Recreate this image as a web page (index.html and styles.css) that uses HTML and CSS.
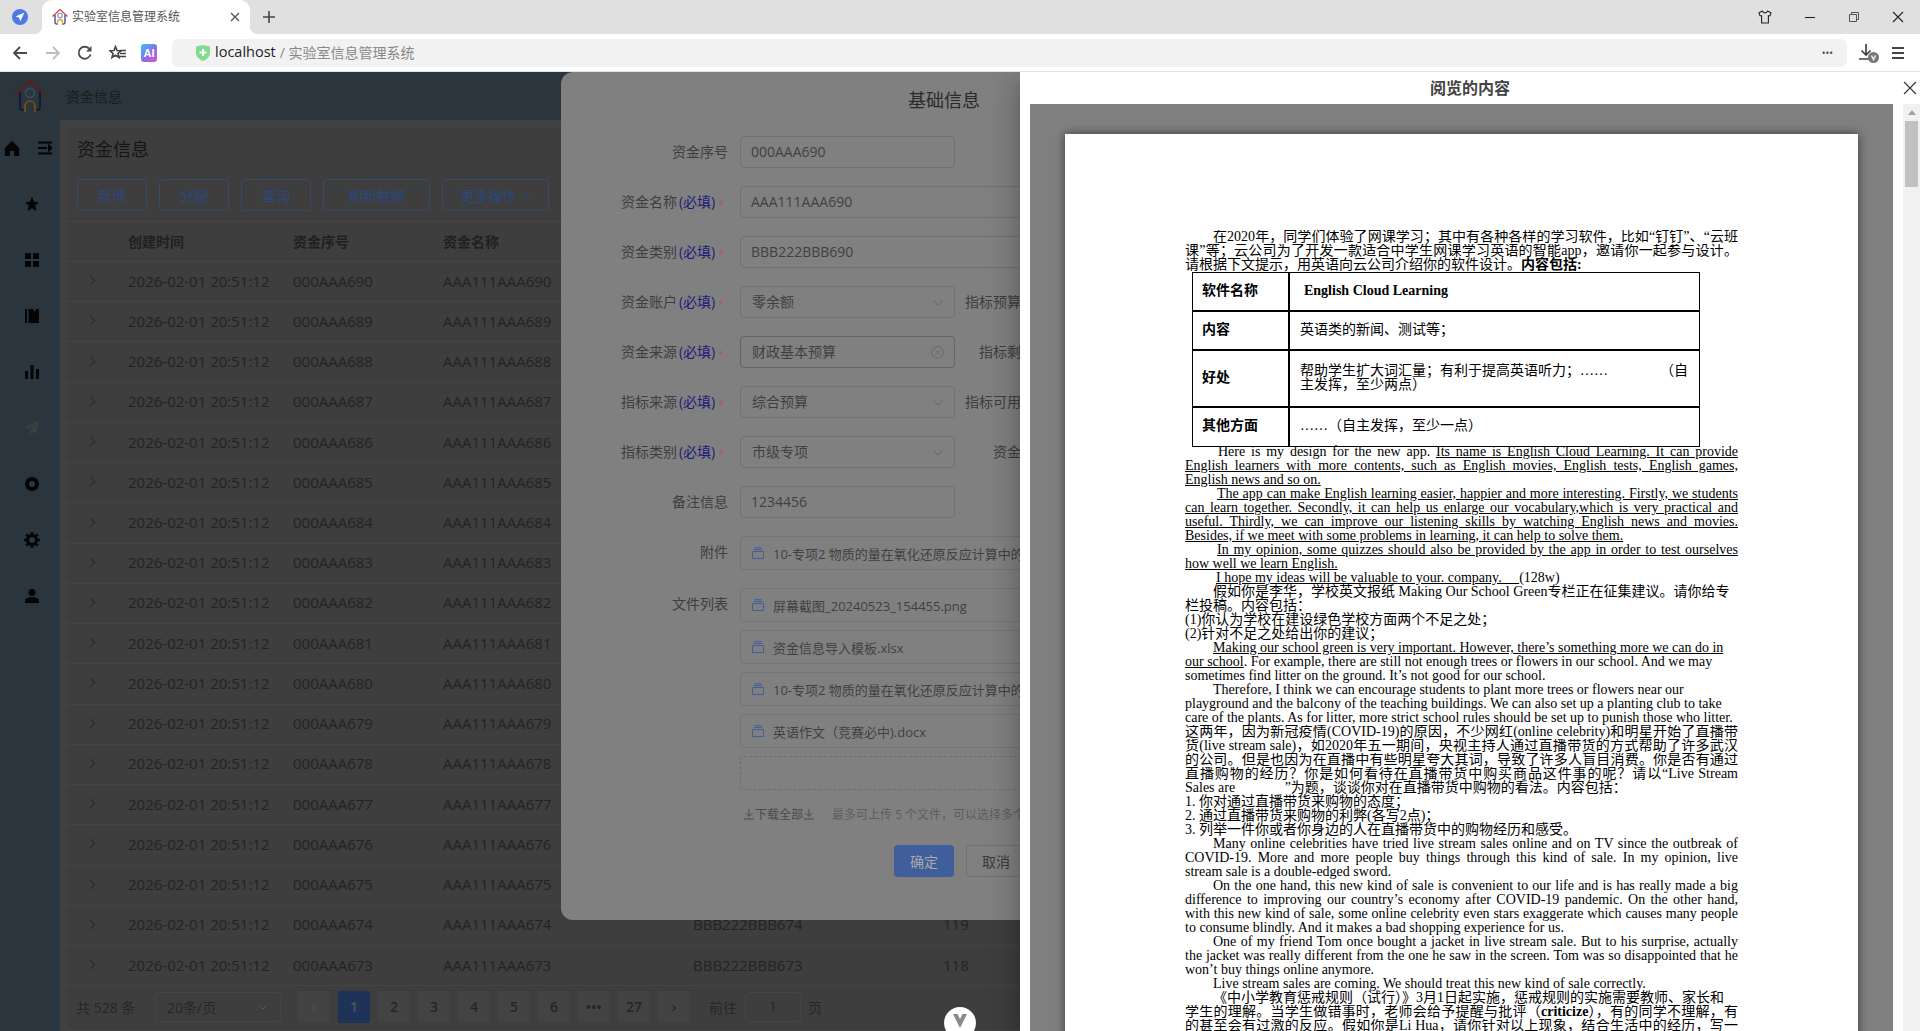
FILE: index.html
```html
<!DOCTYPE html>
<html lang="zh-CN">
<head>
<meta charset="utf-8">
<title>实验室信息管理系统</title>
<link rel="stylesheet" href="styles.css">
</head>
<body>
<header class="chrome">
  <div class="tabstrip">
    <div class="tab-app">
      <svg width="16" height="16" viewBox="0 0 16 16"><circle cx="8" cy="8" r="8" fill="#4c79e6"/><path d="M12.4 3.4 3.6 7.6l3.6 1.1 1.1 3.7z" fill="#fff"/></svg>
    </div>
    <div class="tab">
      <svg class="tab-logo" width="16" height="16" viewBox="0 0 32 32"><path d="M1 15 16 1l15 14" fill="none" stroke="#d8453a" stroke-width="2.6"/><path d="M6 12v15c0 2 1 3 3 3h1M26 12v15c0 2-1 3-3 3h-1" fill="none" stroke="#2b4a86" stroke-width="2.6"/><circle cx="16" cy="13" r="4.5" fill="none" stroke="#7b93c6" stroke-width="2.4"/><path d="M11 32v-6a5 5 0 0 1 10 0v6" fill="none" stroke="#e9a13c" stroke-width="2.6"/></svg>
      <span class="tab-title">实验室信息管理系统</span>
      <svg class="tab-close" width="10" height="10" viewBox="0 0 10 10"><path d="M1 1l8 8M9 1 1 9" stroke="#555" stroke-width="1.3"/></svg>
    </div>
    <svg class="tab-new" width="14" height="14" viewBox="0 0 14 14"><path d="M7 1v12M1 7h12" stroke="#444" stroke-width="1.6"/></svg>
    <div class="window-btns">
      <svg width="14" height="14" viewBox="0 0 14 14"><path d="M4.5 1 1 2.8l1 3h1.6V13h6.8V5.8h1.6l1-3L9.500 1C9 3.500 5 3.500 4.500 1z" fill="none" stroke="#222" stroke-width="1.1"/></svg>
      <svg width="12" height="12" viewBox="0 0 12 12"><path d="M1 6.5h10" stroke="#222" stroke-width="1.1"/></svg>
      <svg width="12" height="12" viewBox="0 0 12 12"><path d="M1.5 3.5h7v7h-7zM3.5 3.5v-2h7v7h-2" fill="none" stroke="#555" stroke-width="1"/></svg>
      <svg width="12" height="12" viewBox="0 0 12 12"><path d="M1 1l10 10M11 1 1 11" stroke="#222" stroke-width="1.1"/></svg>
    </div>
  </div>
  <div class="toolbar">
    <svg class="tool back" width="16" height="16" viewBox="0 0 16 16"><path d="M15 8H2M8 2 2 8l6 6" fill="none" stroke="#4a4a4a" stroke-width="1.8"/></svg>
    <svg class="tool fwd" width="16" height="16" viewBox="0 0 16 16"><path d="M1 8h13M8 2l6 6-6 6" fill="none" stroke="#bdbdbd" stroke-width="1.8"/></svg>
    <svg class="tool reload" width="16" height="16" viewBox="0 0 16 16"><path d="M13.5 9.500A6 6 0 1 1 12 3.500" fill="none" stroke="#4a4a4a" stroke-width="1.8"/><path d="M14.5 1v5.500H9z" fill="#4a4a4a"/></svg>
    <svg class="tool fav" width="18" height="16" viewBox="0 0 18 16"><path d="M6.5 1.500 8 5.500l4 .3-3 2.700 1 4-3.500-2.200L3 12.500l1-4-3-2.700 4-.3z" fill="none" stroke="#444" stroke-width="1.6"/><path d="M11 5.500h6M11 8.500h6M10 11.500h7" stroke="#444" stroke-width="1.6"/></svg>
    <span class="ai-badge">AI</span>
    <div class="address">
      <svg class="shield" width="14" height="16" viewBox="0 0 14 16"><path d="M0 1.500 7 0l7 1.500V8c0 4-3.500 6.500-7 8-3.500-1.500-7-4-7-8z" fill="#83db90"/><path d="M7 4v7M3.500 7.500h7" stroke="#fff" stroke-width="2"/></svg>
      <span class="host">localhost</span>
      <span class="path">/ 实验室信息管理系统</span>
      <span class="more">•••</span>
    </div>
    <div class="download">
      <svg width="22" height="20" viewBox="0 0 22 20"><path d="M8 1v11M3.500 7.500 8 12l4.500-4.500M1 16h12" fill="none" stroke="#444" stroke-width="1.7"/><circle cx="15.500" cy="14.500" r="5.500" fill="#777"/><path d="m13.500 12.500 2 4 2-4" fill="none" stroke="#eee" stroke-width="1.6"/></svg>
    </div>
    <svg class="tool menu" width="14" height="14" viewBox="0 0 14 14"><path d="M1 2h12M1 7h12M1 12h12" stroke="#444" stroke-width="1.8"/></svg>
  </div>
</header>

<div class="app">
  <div class="app-header">
    <svg class="app-logo" width="32" height="32" viewBox="0 0 32 32"><path d="M1 15 16 1l15 14" fill="none" stroke="#5e1d1a" stroke-width="2"/><path d="M6 12v15c0 2 1 3 3 3h1M26 12v15c0 2-1 3-3 3h-1" fill="none" stroke="#141c35" stroke-width="2"/><circle cx="16" cy="13" r="4.500" fill="none" stroke="#35495f" stroke-width="2"/><path d="M11 32v-6a5 5 0 0 1 10 0v6" fill="none" stroke="#6a4a1f" stroke-width="2"/></svg>
    <span class="app-name">资金信息</span>
  </div>
  <div class="app-body">
    <nav class="sidebar">
      <div class="side-top">
        <svg width="16" height="16" viewBox="0 0 16 16"><path d="M8 1 .8 8v8h5v-5h4.400v5h5V8z" fill="#050505"/></svg>
        <svg width="14" height="14" viewBox="0 0 14 14"><path d="M0 1.500h14M0 7h9M0 12.500h14M11 4.500 13.500 7 11 9.500z" stroke="#050505" stroke-width="1.8" fill="#050505"/></svg>
      </div>
      <div class="side-item"><svg width="14" height="14" viewBox="0 0 14 14"><path d="m7 0 2.100 4.700 4.900.5-3.700 3.300L11.400 14 7 11.200 2.600 14l1.100-5.500L0 5.200l4.900-.5z" fill="#050505"/></svg></div>
      <div class="side-item"><svg width="14" height="14" viewBox="0 0 14 14"><path d="M0 0h6v6H0zM8 0h6v6H8zM0 8h6v6H0zM8 8h6v6H8z" fill="#050505"/></svg></div>
      <div class="side-item"><svg width="14" height="14" viewBox="0 0 14 14"><path d="M0 0h2v14H0zM3.500 0H8l1.500 3L11 0h3v14H3.500z" fill="#050505"/></svg></div>
      <div class="side-item"><svg width="14" height="14" viewBox="0 0 14 14"><path d="M0 6h3v8H0zM5.500 0h3v14h-3zM11 4h3v10h-3z" fill="#050505"/></svg></div>
      <div class="side-item"><svg width="14" height="14" viewBox="0 0 14 14"><path d="M14 0 0 6l3.500 2L12 2.500 5 9v5l2.500-3 3.500 2z" fill="#3c3f40"/></svg></div>
      <div class="side-item"><svg width="14" height="14" viewBox="0 0 14 14"><circle cx="7" cy="7" r="5" fill="none" stroke="#050505" stroke-width="4"/></svg></div>
      <div class="side-item"><svg width="16" height="16" viewBox="0 0 16 16"><circle cx="8" cy="8" r="4.500" fill="none" stroke="#050505" stroke-width="3"/><path d="M8 0v3M8 13v3M0 8h3M13 8h3M2.300 2.300l2.200 2.200M11.500 11.500l2.200 2.200M2.300 13.700l2.200-2.200M11.500 4.500l2.200-2.200" stroke="#050505" stroke-width="2.6"/></svg></div>
      <div class="side-item"><svg width="14" height="14" viewBox="0 0 14 14"><circle cx="7" cy="3.500" r="3.500" fill="#050505"/><path d="M0 14v-2c0-2.500 3-4 7-4s7 1.500 7 4v2z" fill="#050505"/></svg></div>
    </nav>
    <main class="main">
      <section class="card">
        <h1 class="page-title">资金信息</h1>
        <div class="actions">
          <button class="btn w70">新增</button><button class="btn w70">分配</button><button class="btn w70">查询</button><button class="btn w107">刷新数据</button><button class="btn w107">更多操作 <svg width="10" height="10" viewBox="0 0 10 10"><path d="m1 3 4 4 4-4" fill="none" stroke="currentColor"/></svg></button>
        </div>
        <div class="table">
          <div class="row head"><span></span><span>创建时间</span><span>资金序号</span><span>资金名称</span></div>
          <div class="row"><i class="chev"></i><span>2026-02-01 20:51:12</span><span>000AAA690</span><span>AAA111AAA690</span></div>
          <div class="row"><i class="chev"></i><span>2026-02-01 20:51:12</span><span>000AAA689</span><span>AAA111AAA689</span></div>
          <div class="row"><i class="chev"></i><span>2026-02-01 20:51:12</span><span>000AAA688</span><span>AAA111AAA688</span></div>
          <div class="row"><i class="chev"></i><span>2026-02-01 20:51:12</span><span>000AAA687</span><span>AAA111AAA687</span></div>
          <div class="row"><i class="chev"></i><span>2026-02-01 20:51:12</span><span>000AAA686</span><span>AAA111AAA686</span></div>
          <div class="row"><i class="chev"></i><span>2026-02-01 20:51:12</span><span>000AAA685</span><span>AAA111AAA685</span></div>
          <div class="row"><i class="chev"></i><span>2026-02-01 20:51:12</span><span>000AAA684</span><span>AAA111AAA684</span></div>
          <div class="row"><i class="chev"></i><span>2026-02-01 20:51:12</span><span>000AAA683</span><span>AAA111AAA683</span></div>
          <div class="row"><i class="chev"></i><span>2026-02-01 20:51:12</span><span>000AAA682</span><span>AAA111AAA682</span></div>
          <div class="row"><i class="chev"></i><span>2026-02-01 20:51:12</span><span>000AAA681</span><span>AAA111AAA681</span></div>
          <div class="row"><i class="chev"></i><span>2026-02-01 20:51:12</span><span>000AAA680</span><span>AAA111AAA680</span></div>
          <div class="row"><i class="chev"></i><span>2026-02-01 20:51:12</span><span>000AAA679</span><span>AAA111AAA679</span></div>
          <div class="row"><i class="chev"></i><span>2026-02-01 20:51:12</span><span>000AAA678</span><span>AAA111AAA678</span></div>
          <div class="row"><i class="chev"></i><span>2026-02-01 20:51:12</span><span>000AAA677</span><span>AAA111AAA677</span></div>
          <div class="row"><i class="chev"></i><span>2026-02-01 20:51:12</span><span>000AAA676</span><span>AAA111AAA676</span></div>
          <div class="row"><i class="chev"></i><span>2026-02-01 20:51:12</span><span>000AAA675</span><span>AAA111AAA675</span></div>
          <div class="row"><i class="chev"></i><span>2026-02-01 20:51:12</span><span>000AAA674</span><span>AAA111AAA674</span><span>BBB222BBB674</span><span>119</span></div>
          <div class="row"><i class="chev"></i><span>2026-02-01 20:51:12</span><span>000AAA673</span><span>AAA111AAA673</span><span>BBB222BBB673</span><span>118</span></div>
        </div>
        <div class="pager">
          <span class="total">共 528 条</span>
          <div class="size">20条/页<svg width="10" height="10" viewBox="0 0 10 10"><path d="m1 3 4 4 4-4" fill="none" stroke="#5a5a5a"/></svg></div>
          <div class="pages">
            <span class="pg dim">‹</span><span class="pg on">1</span><span class="pg">2</span><span class="pg">3</span><span class="pg">4</span><span class="pg">5</span><span class="pg">6</span><span class="pg">•••</span><span class="pg">27</span><span class="pg">›</span>
          </div>
          <span class="goto">前往</span><span class="goto-input">1</span><span class="goto-unit">页</span>
        </div>
      </section>
    </main>
  </div>

  <div class="dialog">
    <h2 class="dialog-title">基础信息</h2>
    <div class="frow"><label class="flabel">资金序号</label><div class="ctl">000AAA690</div></div>
    <div class="frow"><label class="flabel">资金名称<em>(必填)</em><b>*</b></label><div class="ctl wide">AAA111AAA690</div></div>
    <div class="frow"><label class="flabel">资金类别<em>(必填)</em><b>*</b></label><div class="ctl wide">BBB222BBB690</div></div>
    <div class="frow"><label class="flabel">资金账户<em>(必填)</em><b>*</b></label><div class="ctl sel">零余额<svg width="12" height="12" viewBox="0 0 12 12"><path d="m1 4 5 5 5-5" fill="none" stroke="#666"/></svg></div><span class="side">指标预算</span></div>
    <div class="frow"><label class="flabel">资金来源<em>(必填)</em><b>*</b></label><div class="ctl sel focus">财政基本预算<svg width="13" height="13" viewBox="0 0 13 13"><circle cx="6.500" cy="6.500" r="5.800" fill="none" stroke="#666"/><path d="m4.500 4.500 4 4m0-4-4 4" stroke="#666"/></svg></div><span class="side">指标剩</span></div>
    <div class="frow"><label class="flabel">指标来源<em>(必填)</em><b>*</b></label><div class="ctl sel">综合预算<svg width="12" height="12" viewBox="0 0 12 12"><path d="m1 4 5 5 5-5" fill="none" stroke="#666"/></svg></div><span class="side">指标可用</span></div>
    <div class="frow"><label class="flabel">指标类别<em>(必填)</em><b>*</b></label><div class="ctl sel">市级专项<svg width="12" height="12" viewBox="0 0 12 12"><path d="m1 4 5 5 5-5" fill="none" stroke="#666"/></svg></div><span class="side">资金</span></div>
    <div class="frow"><label class="flabel">备注信息</label><div class="ctl">1234456</div></div>
    <div class="frow"><label class="flabel">附件</label><div class="flist"><div class="fitem"><svg width="12" height="12" viewBox="0 0 12 12"><path d="M.5 4.500h11v7H.5zM1.500 2.500h9M2.500.7h7" fill="none" stroke="#3f5e9a"/></svg><span class="fname">10-专项2 物质的量在氧化还原反应计算中的应用</span></div></div></div>
    <div class="frow"><label class="flabel">文件列表</label><div class="flist">
      <div class="fitem"><svg width="12" height="12" viewBox="0 0 12 12"><path d="M.5 4.500h11v7H.5zM1.500 2.500h9M2.500.7h7" fill="none" stroke="#3f5e9a"/></svg><span class="fname">屏幕截图_20240523_154455.png</span></div>
      <div class="fitem"><svg width="12" height="12" viewBox="0 0 12 12"><path d="M.5 4.500h11v7H.5zM1.500 2.500h9M2.500.7h7" fill="none" stroke="#3f5e9a"/></svg><span class="fname">资金信息导入模板.xlsx</span></div>
      <div class="fitem"><svg width="12" height="12" viewBox="0 0 12 12"><path d="M.5 4.500h11v7H.5zM1.500 2.500h9M2.500.7h7" fill="none" stroke="#3f5e9a"/></svg><span class="fname">10-专项2 物质的量在氧化还原反应计算中的应用</span></div>
      <div class="fitem"><svg width="12" height="12" viewBox="0 0 12 12"><path d="M.5 4.500h11v7H.5zM1.500 2.500h9M2.500.7h7" fill="none" stroke="#3f5e9a"/></svg><span class="fname">英语作文（竞赛必中).docx</span></div>
      <div class="fdrop"></div>
      <div class="fhint"><a class="dl"><svg width="10" height="12" viewBox="0 0 10 12"><path d="M5 1v7M1.500 5 5 8.500 8.500 5M0 11h10" fill="none" stroke="#4a4a4a"/></svg>下载全部<svg width="10" height="12" viewBox="0 0 10 12"><path d="M5 1v7M1.500 5 5 8.500 8.500 5M0 11h10" fill="none" stroke="#4a4a4a"/></svg></a><span class="limit">最多可上传 5 个文件，可以选择多个</span></div>
    </div></div>
    <div class="dialog-foot"><button class="ok">确定</button><button class="cancel">取消</button></div>
  </div>

  <aside class="drawer">
    <div class="drawer-head">
      <span class="drawer-title">阅览的内容</span>
      <svg class="drawer-x" width="14" height="14" viewBox="0 0 14 14"><path d="M1 1l12 12M13 1 1 13" stroke="#333" stroke-width="1.1"/></svg>
    </div>
    <div class="drawer-body">
      <div class="viewer">
        <article class="paper">
          <p class="l j i28">在2020年，同学们体验了网课学习；其中有各种各样的学习软件，比如“钉钉”、“云班</p>
          <p class="l j">课”等；云公司为了开发一款适合中学生网课学习英语的智能app，邀请你一起参与设计。</p>
          <p class="l">请根据下文提示，用英语向云公司介绍你的软件设计。<b>内容包括:</b></p>
          <div class="doc-table">
            <div class="dc k r1"><b>软件名称</b></div><div class="dc v r1 en"><b>English Cloud Learning</b></div>
            <div class="dc k r2"><b>内容</b></div><div class="dc v r2">英语类的新闻、测试等；</div>
            <div class="dc k r3"><b>好处</b></div><div class="dc v r3"><div class="split"><span>帮助学生扩大词汇量；有利于提高英语听力；……</span><span>（自</span></div><div>主发挥，至少两点）</div></div>
            <div class="dc k r4"><b>其他方面</b></div><div class="dc v r4">……（自主发挥，至少一点）</div>
          </div>
          <p class="l j i33">Here is my design for the new app. <u>Its name is English Cloud Learning. It can provide</u></p>
          <p class="l j"><u>English learners with more contents, such as English movies, English tests, English games,</u></p>
          <p class="l"><u>English news and so on.</u></p>
          <p class="l j i32"><u>The app can make English learning easier, happier and more interesting. Firstly, we students</u></p>
          <p class="l j"><u>can learn together. Secondly, it can help us enlarge our vocabulary,which is very practical and</u></p>
          <p class="l j"><u>useful. Thirdly, we can improve our listening skills by watching English news and movies.</u></p>
          <p class="l"><u>Besides, if we meet with some problems in learning, it can help to solve them.</u></p>
          <p class="l j i32"><u>In my opinion, some quizzes should also be provided by the app in order to test ourselves</u></p>
          <p class="l"><u>how well we learn English.</u></p>
          <p class="l i31"><u>I hope my ideas will be valuable to your. company.&nbsp;&nbsp;&nbsp;&nbsp;&nbsp;</u>(128w)</p>
          <p class="l i28">假如你是李华，学校英文报纸 Making Our School Green专栏正在征集建议。请你给专</p>
          <p class="l">栏投稿。内容包括：</p>
          <p class="l">(1)你认为学校在建设绿色学校方面两个不足之处；</p>
          <p class="l">(2)针对不足之处给出你的建议；</p>
          <p class="l i28"><u>Making our school green is very important. However, there’s something more we can do in</u></p>
          <p class="l"><u>our school</u>. For example, there are still not enough trees or flowers in our school. And we may</p>
          <p class="l">sometimes find litter on the ground. It’s not good for our school.</p>
          <p class="l i28">Therefore, I think we can encourage students to plant more trees or flowers near our</p>
          <p class="l">playground and the balcony of the teaching buildings. We can also set up a planting club to take</p>
          <p class="l">care of the plants. As for litter, more strict school rules should be set up to punish those who litter.</p>
          <p class="l j">这两年，因为新冠疫情(COVID-19)的原因，不少网红(online celebrity)和明星开始了直播带</p>
          <p class="l j">货(live stream sale)，如2020年五一期间，央视主持人通过直播带货的方式帮助了许多武汉</p>
          <p class="l j">的公司。但是也因为在直播中有些明星夸大其词，导致了许多人盲目消费。你是否有通过</p>
          <p class="l j">直播购物的经历？你是如何看待在直播带货中购买商品这件事的呢？请以“Live Stream</p>
          <p class="l">Sales are&nbsp;<span class="blank"></span>”为题，谈谈你对在直播带货中购物的看法。内容包括：</p>
          <p class="l">1. 你对通过直播带货来购物的态度；</p>
          <p class="l">2. 通过直播带货来购物的利弊(各写2点)；</p>
          <p class="l">3. 列举一件你或者你身边的人在直播带货中的购物经历和感受。</p>
          <p class="l j i28">Many online celebrities have tried live stream sales online and on TV since the outbreak of</p>
          <p class="l j">COVID-19. More and more people buy things through this kind of sale. In my opinion, live</p>
          <p class="l">stream sale is a double-edged sword.</p>
          <p class="l j i28">On the one hand, this new kind of sale is convenient to our life and is has really made a big</p>
          <p class="l j">difference to improving our country’s economy after COVID-19 pandemic. On the other hand,</p>
          <p class="l j">with this new kind of sale, some online celebrity even stars exaggerate which causes many people</p>
          <p class="l">to consume blindly. And it makes a bad shopping experience for us.</p>
          <p class="l j i28">One of my friend Tom once bought a jacket in live stream sale. But to his surprise, actually</p>
          <p class="l j">the jacket was really different from the one he saw in the screen. Tom was so disappointed that he</p>
          <p class="l">won’t buy things online anymore.</p>
          <p class="l i28">Live stream sales are coming. We should treat this new kind of sale correctly.</p>
          <p class="l i28">《中小学教育惩戒规则（试行）》3月1日起实施，惩戒规则的实施需要教师、家长和</p>
          <p class="l j">学生的理解。当学生做错事时，老师会给予提醒与批评（<b>criticize</b>），有的同学不理解，有</p>
          <p class="l j">的甚至会有过激的反应。假如你是Li Hua，请你针对以上现象，结合生活中的经历，写一</p>
        </article>
      </div>
      <div class="scrollbar"><i class="sb-up"></i><i class="sb-thumb"></i></div>
    </div>
  </aside>

  <div class="float-btn"><svg width="14" height="14" viewBox="0 0 14 14"><path d="M0 0h4.500L7 5l2.500-5H14L7 14z" fill="#8a8a8a"/></svg></div>
</div>
</body>
</html>
```
FILE: styles.css
```css
* { box-sizing: border-box; }
html, body { margin: 0; height: 1031px; overflow: hidden; }
body { font-family: "Open Sans", "Noto Sans CJK SC", sans-serif; font-size: 14px; color: #222; background: #fff; }
svg { display: block; flex: none; }

/* browser chrome */
.chrome { height: 72px; background: #fff; border-bottom: 1px solid #e2e2e2; }
.tabstrip { height: 34px; background: #e0e0e0; display: flex; align-items: center; position: relative; }
.tab-app { width: 42px; padding-left: 12px; }
.tab { width: 208px; height: 34px; background: #fff; border-radius: 10px 10px 0 0; display: flex; align-items: center; padding-left: 10px; position: relative; }
.tab::before, .tab::after { content: ""; position: absolute; bottom: 0; width: 8px; height: 8px; }
.tab::before { left: -8px; background: radial-gradient(circle at 0 0, #e0e0e0 8px, #fff 8.5px); }
.tab::after { right: -8px; background: radial-gradient(circle at 100% 0, #e0e0e0 8px, #fff 8.5px); }
.tab-title { margin-left: 4px; padding-bottom: 2px; font-size: 12px; color: #555; width: 148px; white-space: nowrap; }
.tab-close { margin-left: 10px; }
.tab-new { margin-left: 12px; }
.window-btns { margin-left: auto; display: flex; align-items: center; gap: 32px; padding-right: 16px; }
.toolbar { height: 37px; display: flex; align-items: center; position: relative; }
.back { margin-left: 12px; }
.fwd { margin-left: 17px; }
.reload { margin-left: 16px; }
.fav { margin-left: 16px; }
.ai-badge { margin-left: 14px; width: 16px; height: 18px; border-radius: 3px; background: linear-gradient(135deg, #46b4f0 10%, #8a6cf0 55%, #e552c8); color: #fff; font: 700 11px/18px "Liberation Sans", sans-serif; text-align: center; }
.address { margin-left: 15px; width: 1675px; height: 28px; background: #f2f2f2; border-radius: 6px; display: flex; align-items: center; padding-left: 24px; }
.shield { margin-top: 1px; }
.host { margin-left: 5px; padding-bottom: 2px; font-size: 14.5px; color: #222; }
.path { margin-left: 4px; padding-bottom: 2px; font-size: 14px; color: #888; }
.more { margin-left: auto; margin-right: 14px; font-size: 10px; color: #444; }
.download { margin-left: 11px; }
.menu { margin-left: 11px; }

/* application */
.app { position: relative; height: 959px; overflow: hidden; }
.app-header { height: 48px; background: #2a353d; display: flex; align-items: center; padding-left: 14px; }
.app-name { margin-left: 20px; color: #1c1c1c; font-size: 14px; }
.app-body { display: flex; height: 911px; }
.sidebar { width: 60px; background: #2a353d; flex: none; }
.side-top { height: 56px; display: flex; align-items: center; padding: 0 8px 0 4px; justify-content: space-between; }
.side-item { height: 56px; display: flex; align-items: center; justify-content: center; padding-left: 4px; }
.main { flex: 1; background: #404040; padding: 6px 0 0 6px; }
.card { background: #3e3e3e; border: 1px solid #434343; height: 100%; }
.page-title { margin: 0; padding: 7px 0 0 10px; font-size: 18px; line-height: 30px; font-weight: 400; color: #161616; height: 52px; }
.actions { display: flex; gap: 12px; padding-left: 10px; height: 32px; }
.btn { height: 32px; border: 1px solid #364a6c; border-radius: 4px; background: #3e3e3e; color: #2c4880; font: 14px "Open Sans", "Noto Sans CJK SC", sans-serif; display: flex; align-items: center; justify-content: center; gap: 5px; padding: 0; }
.w70 { width: 70px; }
.w107 { width: 107px; }
.table { margin-top: 10px; border-bottom: 1px solid #454545; }
.row { display: grid; grid-template-columns: 61px 165px 150px 250px 250px 1fr; align-items: center; height: 40.24px; padding-bottom: 2px; border-top: 1px solid #454545; color: #232323; font-size: 15px; line-height: 20px; white-space: nowrap; }
.head { font-size: 14px; font-weight: 700; color: #202020; height: 40px; padding-bottom: 0; }
.chev { display: block; width: 7px; height: 7px; margin-left: 20px; border-top: 1px solid #2a2a2a; border-right: 1px solid #2a2a2a; transform: rotate(45deg); }
.pager { display: flex; align-items: center; height: 32px; margin-top: 5px; padding-left: 9px; color: #262626; font-size: 14px; }
.total { width: 79px; white-space: nowrap; }
.size { width: 126px; height: 30px; border: 1px solid #464646; border-radius: 4px; display: flex; align-items: center; justify-content: space-between; padding: 0 12px 0 11px; white-space: nowrap; }
.pages { display: flex; gap: 8px; margin-left: 17px; }
.pg { width: 32px; height: 32px; background: #434343; text-align: center; line-height: 32px; border-radius: 2px; font-weight: 600; font-size: 14px; color: #262626; }
.pg.dim { color: #4e4e4e; }
.pg.on { background: #1f3258; color: #50555e; }
.goto { margin-left: 19px; white-space: nowrap; }
.goto-input { margin-left: 8px; width: 56px; height: 30px; border: 1px solid #464646; border-radius: 4px; text-align: center; line-height: 28px; }
.goto-unit { margin-left: 7px; }

/* dialog */
.dialog { position: absolute; left: 561px; top: 0; width: 766px; height: 848px; background: #808080; border-radius: 12px; color: #3c3c3c; }
.dialog-title { margin: 0; height: 64px; font-size: 18px; line-height: 56px; font-weight: 400; color: #2a2a2a; text-align: center; }
.frow { display: flex; align-items: flex-start; margin-bottom: 18px; }
.flabel { width: 167px; height: 32px; line-height: 32px; text-align: right; flex: none; margin-right: 12px; white-space: nowrap; color: #3e3e3e; }
.flabel em { font-style: normal; color: #1f1a7c; margin-left: 2px; }
.flabel b { font: 400 15px/32px "Liberation Sans", sans-serif; color: #a5605f; margin-left: 3px; margin-right: 4px; vertical-align: -3px; }
.ctl { width: 215px; height: 32px; border: 1px solid #717171; border-radius: 4px; padding: 0 10px; line-height: 30px; font-size: 14px; color: #404040; display: flex; align-items: center; justify-content: space-between; flex: none; white-space: nowrap; }
.ctl.sel { padding-left: 11px; }
.ctl.wide { width: 560px; }
.ctl.focus { border-color: #636363; }
.side { width: 66px; height: 32px; line-height: 32px; text-align: right; color: #3e3e3e; white-space: nowrap; flex: none; }
.flist { display: flex; flex-direction: column; gap: 8px; width: 560px; }
.fitem { height: 34px; border: 1px solid #747474; border-radius: 4px; display: flex; align-items: center; padding-left: 11px; white-space: nowrap; overflow: hidden; }
.fname { margin-left: 9px; color: #404040; font-size: 13px; }
.fdrop { height: 34px; border: 1px dashed #6e6e6e; border-radius: 4px; }
.fhint { display: flex; align-items: center; height: 20px; margin-top: 6px; padding-left: 4px; white-space: nowrap; }
.dl { display: flex; align-items: center; gap: 1px; color: #4a4a4a; font-size: 12px; }
.limit { margin-left: 18px; font-size: 12px; color: #5e5e5e; }
.dialog-foot { display: flex; gap: 12px; margin-top: 21px; padding-left: 333px; }
.ok, .cancel { height: 32px; border-radius: 4px; font: 14px "Open Sans", "Noto Sans CJK SC", sans-serif; padding: 0; }
.ok { width: 60px; background: #3f5e9b; border: 0; color: #a9a9a9; }
.cancel { width: 60px; background: transparent; border: 1px solid #717171; color: #3a3a3a; }

/* drawer */
.drawer { position: absolute; left: 1020px; top: 0; right: 0; bottom: 0; background: #fff; box-shadow: 0 8px 10px -5px rgba(0,0,0,.2), 0 16px 24px 2px rgba(0,0,0,.14), 0 6px 30px 5px rgba(0,0,0,.12); display: flex; flex-direction: column; }
.drawer-head { height: 32px; flex: none; display: flex; align-items: center; justify-content: center; position: relative; padding: 0 10px 2px 0; }
.drawer-title { font-size: 16px; font-weight: 700; color: #444; margin-left: 10px; }
.drawer-x { position: absolute; right: 3px; top: 9px; }
.drawer-body { flex: 1; display: flex; min-height: 0; padding-left: 10px; }
.viewer { width: 863px; background: #808080; padding: 30px 0 0 35px; overflow: hidden; }
.paper { width: 793px; height: 1000px; background: #fff; box-shadow: 0 0 10px rgba(0,0,0,.55); padding: 96px 120px 0; color: #000; font-family: "Liberation Serif", "Noto Sans CJK SC", serif; font-size: 14px; }
.l { margin: 0; height: 14px; line-height: 14px; white-space: nowrap; }
.l.j { white-space: normal; text-align: justify; text-align-last: justify; overflow: hidden; }
.i28 { padding-left: 28px; }
.i31 { padding-left: 31px; }
.i32 { padding-left: 32px; }
.i33 { padding-left: 33px; }
.blank { display: inline-block; width: 46px; }
.doc-table { margin: 0 0 -2px 7px; width: 508px; display: grid; grid-template-columns: 97px 1fr; grid-template-rows: 39px 39px 57px 38px; border: 1px solid #000; }
.dc { display: flex; flex-direction: column; justify-content: center; line-height: 14px; padding-bottom: 2px; border-bottom: 2px solid #000; }
.r4 { border-bottom: 0; }
.dc.k { padding-left: 9px; border-right: 2px solid #000; }
.dc.v { padding-left: 10px; padding-right: 11px; }
.dc.en { padding-left: 14px; }
.split { display: flex; justify-content: space-between; }
.scrollbar { width: 17px; margin-left: 10px; background: #f1f1f1; }
.sb-up { display: block; width: 0; margin: 6px auto 0; border: 4px solid transparent; border-bottom: 5px solid #a3a3a3; border-top: 0; }
.sb-thumb { display: block; width: 13px; height: 66px; margin: 6px auto 0; background: #c1c1c1; }

.float-btn { position: absolute; left: 944px; top: 935px; width: 32px; height: 32px; border-radius: 50%; background: #fff; display: flex; align-items: center; justify-content: center; padding-bottom: 4px; }
```
